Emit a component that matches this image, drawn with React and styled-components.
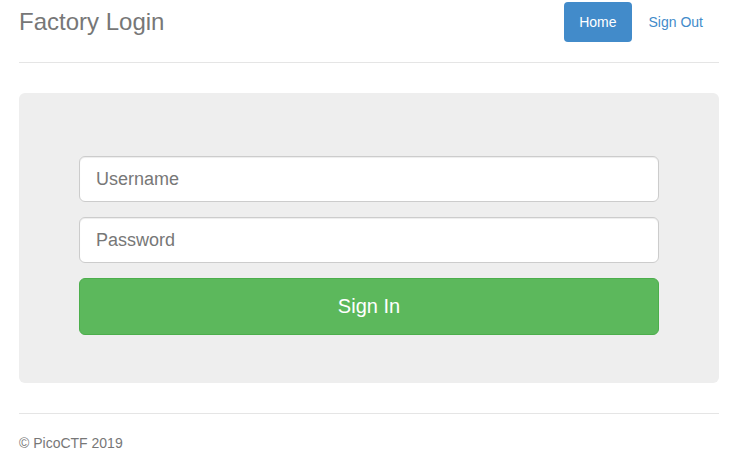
import React from 'react';
import styled, { createGlobalStyle } from 'styled-components';

const GlobalStyle = createGlobalStyle`
  html, body {
    margin: 0;
    padding: 0;
    background: #fff;
  }
  body {
    font-family: "Liberation Sans", Arial, Helvetica, sans-serif;
    font-size: 14px;
    line-height: 20px;
    color: #333;
  }
  * {
    box-sizing: border-box;
  }
`;

const Container = styled.div`
  width: 700px;
  margin: 0 0 0 19px;
  padding-top: 2px;
`;

const Header = styled.div`
  display: flex;
  justify-content: space-between;
  align-items: flex-start;
  padding-bottom: 20px;
  border-bottom: 1px solid #e5e5e5;
  margin-bottom: 30px;
`;

const Title = styled.h3`
  margin: 0;
  font-size: 24px;
  font-weight: 500;
  line-height: 40px;
  color: #777;
`;

const Nav = styled.nav`
  display: flex;
  gap: 2px;
  margin-right: 1px;
`;

const Pill = styled.a`
  display: block;
  padding: 10px 15px;
  line-height: 20px;
  font-size: 14px;
  border-radius: 4px;
  text-decoration: none;
  color: ${(p) => (p.$active ? '#fff' : '#428bca')};
  background: ${(p) => (p.$active ? '#428bca' : 'transparent')};
`;

const Jumbotron = styled.div`
  background: #eee;
  border-radius: 6px;
  padding: 63px 60px 48px;
`;

const Form = styled.form`
  display: flex;
  flex-direction: column;
  gap: 15px;
`;

const Input = styled.input`
  display: block;
  width: 100%;
  height: 46px;
  padding: 10px 16px;
  font-family: inherit;
  font-size: 18px;
  color: #555;
  background: #fff;
  border: 1px solid #ccc;
  border-radius: 6px;
  box-shadow: inset 0 1px 1px rgba(0, 0, 0, 0.075);
  outline: none;

  &::placeholder {
    color: #777;
    opacity: 1;
  }
`;

const SubmitButton = styled.button`
  display: block;
  width: 100%;
  height: 57px;
  font-family: inherit;
  font-size: 20px;
  color: #fff;
  background: #5cb85c;
  border: 1px solid #4cae4c;
  border-radius: 6px;
  cursor: pointer;
`;

const Footer = styled.footer`
  margin-top: 30px;
  padding-top: 19px;
  border-top: 1px solid #e5e5e5;
  color: #777;
  font-size: 14px;
  line-height: 20px;
`;

export default function App() {
  return (
    <>
      <GlobalStyle />
      <Container>
        <Header>
          <Title>Factory Login</Title>
          <Nav>
            <Pill href="#" $active>
              Home
            </Pill>
            <Pill href="#">Sign Out</Pill>
          </Nav>
        </Header>
        <Jumbotron>
          <Form onSubmit={(e) => e.preventDefault()}>
            <Input type="text" placeholder="Username" />
            <Input type="password" placeholder="Password" />
            <SubmitButton type="submit">Sign In</SubmitButton>
          </Form>
        </Jumbotron>
        <Footer>© PicoCTF 2019</Footer>
      </Container>
    </>
  );
}
